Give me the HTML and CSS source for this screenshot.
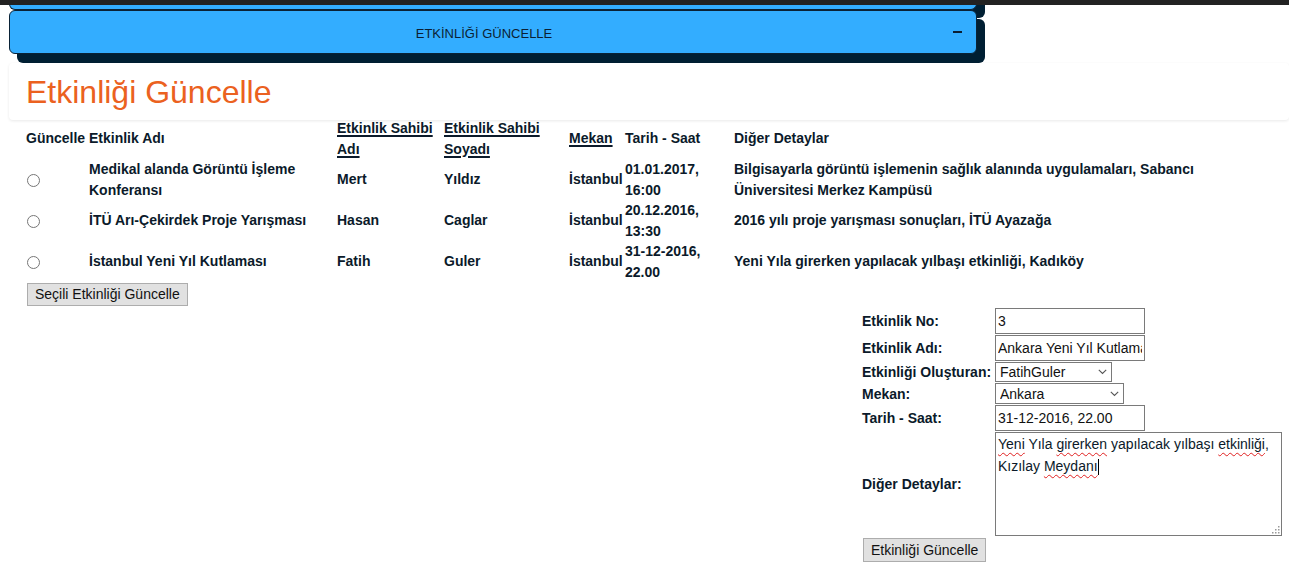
FILE: index.html
```html
<!DOCTYPE html>
<html lang="tr">
<head>
<meta charset="utf-8">
<title>Etkinliği Güncelle</title>
<link rel="stylesheet" href="styles.css">
</head>
<body>
<div class="topbar"></div>
<div class="accordion">
  <div class="acc-prev"></div>
  <div class="acc-head">
    <span class="acc-title">ETKİNLİĞİ GÜNCELLE</span>
    <span class="acc-minus"></span>
  </div>
</div>
<div class="panel">
  <h1 class="title">Etkinliği Güncelle</h1>
</div>
<form class="list-form">
  <table class="events">
    <colgroup>
      <col class="c1"><col class="c2"><col class="c3"><col class="c4"><col class="c5"><col class="c6"><col class="c7">
    </colgroup>
    <thead>
      <tr>
        <th>Güncelle</th>
        <th>Etkinlik Adı</th>
        <th><a class="sort" href="#">Etkinlik Sahibi Adı</a></th>
        <th><a class="sort" href="#">Etkinlik Sahibi Soyadı</a></th>
        <th><a class="sort" href="#">Mekan</a></th>
        <th>Tarih - Saat</th>
        <th>Diğer Detaylar</th>
      </tr>
    </thead>
    <tbody>
      <tr>
        <td><input class="radio" type="radio" name="sec"></td>
        <td>Medikal alanda Görüntü İşleme Konferansı</td>
        <td>Mert</td>
        <td>Yıldız</td>
        <td>İstanbul</td>
        <td>01.01.2017, 16:00</td>
        <td>Bilgisayarla görüntü işlemenin sağlık alanında uygulamaları, Sabancı Üniversitesi Merkez Kampüsü</td>
      </tr>
      <tr>
        <td><input class="radio" type="radio" name="sec"></td>
        <td>İTÜ Arı-Çekirdek Proje Yarışması</td>
        <td>Hasan</td>
        <td>Caglar</td>
        <td>İstanbul</td>
        <td>20.12.2016, 13:30</td>
        <td>2016 yılı proje yarışması sonuçları, İTÜ Ayazağa</td>
      </tr>
      <tr>
        <td><input class="radio" type="radio" name="sec"></td>
        <td>İstanbul Yeni Yıl Kutlaması</td>
        <td>Fatih</td>
        <td>Guler</td>
        <td>İstanbul</td>
        <td>31-12-2016, 22.00</td>
        <td>Yeni Yıla girerken yapılacak yılbaşı etkinliği, Kadıköy</td>
      </tr>
    </tbody>
  </table>
  <div class="actions">
    <button type="button" class="btn">Seçili Etkinliği Güncelle</button>
  </div>
</form>
<div class="edit-wrap">
  <form class="edit-form">
    <label class="lbl">Etkinlik No:</label>
    <input class="field" type="text" value="3">
    <label class="lbl">Etkinlik Adı:</label>
    <input class="field" type="text" value="Ankara Yeni Yıl Kutlaması">
    <label class="lbl">Etkinliği Oluşturan:</label>
    <span class="select sel-user">
      <select class="sel"><option>FatihGuler</option></select>
      <svg class="chev" width="9" height="6" viewBox="0 0 9 6"><path d="M0.8 0.8 L4.5 4.5 L8.2 0.8" fill="none" stroke="#555" stroke-width="1.1"/></svg>
    </span>
    <label class="lbl">Mekan:</label>
    <span class="select sel-place">
      <select class="sel"><option>Ankara</option></select>
      <svg class="chev" width="9" height="6" viewBox="0 0 9 6"><path d="M0.8 0.8 L4.5 4.5 L8.2 0.8" fill="none" stroke="#555" stroke-width="1.1"/></svg>
    </span>
    <label class="lbl">Tarih - Saat:</label>
    <input class="field" type="text" value="31-12-2016, 22.00">
    <label class="lbl">Diğer Detaylar:</label>
    <div class="tarea" role="textbox" aria-multiline="true"><span class="sp">Yeni</span> Yıla <span class="sp">girerken</span> yapılacak yılbaşı <span class="sp">etkinliği</span>, Kızılay <span class="sp">Meydanı</span><span class="caret"></span><svg class="grip" width="9" height="9" viewBox="0 0 9 9"><g fill="#9a9a9a"><rect x="7" y="1" width="1.5" height="1.5"/><rect x="4" y="4" width="1.5" height="1.5"/><rect x="7" y="4" width="1.5" height="1.5"/><rect x="1" y="7" width="1.5" height="1.5"/><rect x="4" y="7" width="1.5" height="1.5"/><rect x="7" y="7" width="1.5" height="1.5"/></g></svg></div>
    <button type="button" class="btn btn-save">Etkinliği Güncelle</button>
  </form>
</div>
</body>
</html>
```
FILE: styles.css
```css
* { box-sizing: border-box; }
html, body { margin: 0; background: #fff; }
body {
  font-family: "Liberation Sans", Arial, sans-serif;
  font-size: 14px;
  color: #0b1a2a;
  overflow: hidden;
}
.topbar {
  height: 5px;
  background: #222;
  position: relative;
  z-index: 2;
}
.accordion {
  margin-left: 9px;
  width: 968px;
}
.acc-prev {
  height: 30px;
  margin-top: -25px;
  background: #33adff;
  border: 1px solid #0a2236;
  border-top: 0;
  border-radius: 0 0 6px 6px;
  box-shadow: 8px 8px 0 #001f33;
}
.acc-head {
  height: 44px;
  background: #33adff;
  border: 1px solid #0a2236;
  border-radius: 6px;
  box-shadow: 8px 9px 0 #001f33;
  display: flex;
  align-items: center;
  padding: 0 14px 0 5px;
}
.acc-title {
  flex: 1;
  text-align: center;
  font-size: 13px;
  color: #0b1f33;
  padding-top: 2px;
}
.acc-minus {
  width: 9px;
  height: 2px;
  background: #0b1f33;
}
.panel {
  margin: 9px 0 0 9px;
  padding: 11px 15px 10px 17px;
  background: #fff;
  border-radius: 4px;
  box-shadow: 0 1px 3px rgba(0, 0, 0, 0.09);
}
.title {
  margin: 0;
  font-size: 32px;
  line-height: 36px;
  font-weight: normal;
  color: #eb6120;
}
.events {
  margin: -2px 0 0 26px;
  border-collapse: collapse;
  table-layout: fixed;
  width: 1208px;
}
.c1 { width: 63px; }
.c2 { width: 248px; }
.c3 { width: 107px; }
.c4 { width: 125px; }
.c5 { width: 56px; }
.c6 { width: 109px; }
.c7 { width: 500px; }
.events th, .events td {
  padding: 0;
  line-height: 20.5px;
  font-weight: bold;
  text-align: left;
  vertical-align: middle;
  white-space: normal;
}
.sort {
  color: #0b1a2a;
  text-decoration: underline;
  text-decoration-thickness: 2px;
  text-underline-offset: 2px;
}
.radio {
  margin: 0 0 0 1px;
  width: 13px;
  height: 13px;
  vertical-align: middle;
}
.actions {
  padding-left: 27px;
  margin-top: 1px;
}
.btn {
  font-family: "Liberation Sans", Arial, sans-serif;
  font-size: 14px;
  line-height: 15px;
  padding: 3px 7px;
  background: #e1e1e1;
  border: 1px solid #adadad;
  border-radius: 0;
  color: #111;
}
.edit-wrap {
  display: flex;
  justify-content: flex-end;
  padding-right: 7px;
  margin-top: 2px;
}
.edit-form {
  display: grid;
  grid-template-columns: 134px 287px;
  row-gap: 1px;
  align-items: center;
}
.lbl {
  font-weight: bold;
  white-space: nowrap;
  padding-left: 1px;
}
.field {
  width: 150px;
  height: 26px;
  border: 1px solid #7a7a7a;
  padding: 0 2px;
  font-family: "Liberation Sans", Arial, sans-serif;
  font-size: 14px;
  color: #111;
  background: #fff;
  border-radius: 0;
  outline: none;
}
.select {
  position: relative;
  display: block;
  justify-self: start;
}
.sel-user { width: 117px; height: 20px; }
.sel-place { width: 129px; height: 21px; }
.sel {
  appearance: none;
  -webkit-appearance: none;
  width: 100%;
  height: 100%;
  border: 1px solid #7a7a7a;
  border-radius: 0;
  padding: 0 20px 0 4px;
  font-family: "Liberation Sans", Arial, sans-serif;
  font-size: 14px;
  color: #111;
  background: #fff;
}
.chev {
  position: absolute;
  right: 5px;
  top: 50%;
  margin-top: -3px;
}
.tarea {
  position: relative;
  width: 287px;
  height: 104px;
  border: 1px solid #7a7a7a;
  padding: 0 2px;
  font-size: 14px;
  line-height: 22px;
  color: #0b1a2a;
  background: #fff;
}
.sp {
  text-decoration: underline wavy #e02020;
  text-decoration-thickness: 1px;
  text-decoration-skip-ink: none;
  text-underline-offset: 3px;
}
.caret {
  display: inline-block;
  width: 1px;
  height: 16px;
  background: #000;
  vertical-align: -4px;
}
.grip {
  position: absolute;
  right: 1px;
  bottom: 1px;
}
.btn-save {
  grid-column: 1;
  justify-self: start;
  margin: 1px 0 0 2px;
  line-height: 16px;
}
```
